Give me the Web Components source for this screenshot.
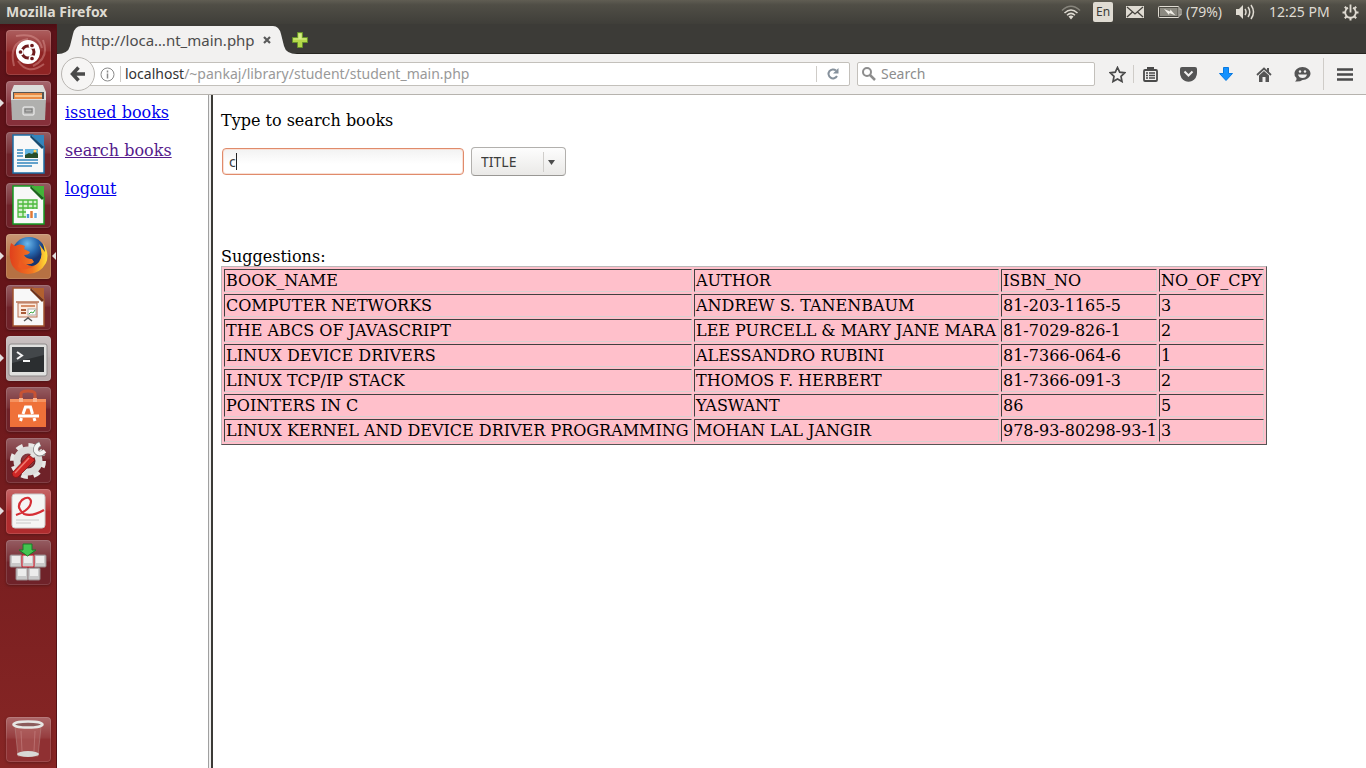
<!DOCTYPE html>
<html lang="en">
<head>
<meta charset="utf-8">
<title>Mozilla Firefox</title>
<style>
  html, body { margin: 0; }
  body { background: #fff; font-family: "Noto Sans", "Open Sans", sans-serif; font-size: 14px; }
</style>
</head>
<body>
<desktop-shell>
  <top-panel slot="panel"></top-panel>
  <app-launcher slot="launcher"></app-launcher>
  <browser-window>
    <tab-strip slot="chrome"></tab-strip>
    <nav-toolbar slot="chrome"></nav-toolbar>
    <menu-frame slot="menu"></menu-frame>
    <search-frame slot="main"></search-frame>
  </browser-window>
</desktop-shell>

<script>
const define = (name, css, html) => {
  const template = document.createElement('template');
  template.innerHTML = `<style>*,:host{box-sizing:border-box}svg{display:block}${css}</style>${html}`;
  customElements.define(name, class extends HTMLElement {
    constructor() {
      super();
      this.attachShadow({ mode: 'open' }).append(template.content.cloneNode(true));
    }
  });
};

define('desktop-shell', `
  :host { display: grid; grid-template: auto 1fr / auto 1fr; min-height: 100vh; }
  .panel { grid-column: 1 / 3; }
`, `<div class="panel"><slot name="panel"></slot></div><slot name="launcher"></slot><slot></slot>`);

/* ---------- top panel ---------- */
define('top-panel', `
  :host { display: flex; align-items: center; height: 24px; padding: 0 7px 0 6px;
    background: linear-gradient(#605d53, #504e46 20%, #3f3e39); color: #dfdbd2; }
  .title { flex: 1; font-weight: 700; font-size: 14px; line-height: 24px; }
  .indicators { display: flex; align-items: center; font-size: 14px; line-height: 24px; }
  .lang { width: 20px; height: 20px; margin: 0 13px 0 12px; border-radius: 2px; background: #dfdbd2; color: #3c3b37;
    font-size: 12px; line-height: 20px; text-align: center; }
  .pct { margin: 0 13px 0 4px; width: 37px; white-space: nowrap; }
  .time { margin: 0 13px; width: 60px; white-space: nowrap; }
  .bat { margin-left: 14px; }
`, `
  <span class="title">Mozilla Firefox</span>
  <div class="indicators">
    <svg width="20" height="16" viewBox="0 0 20 16" fill="none" stroke="#dfdbd2" stroke-width="1.5">
      <path d="M1 6.500Q10-2 19 6.500" opacity=".4"/><path d="M3.500 9Q10 3 16.500 9"/><path d="M6 11.200Q10 7.500 14 11.200"/><path d="M7.500 12.500 10 15.500 12.500 12.500Q10 10.500 7.500 12.500Z" fill="#dfdbd2" stroke="none"/></svg>
    <span class="lang">En</span>
    <svg width="18" height="12" viewBox="0 0 18 12"><rect width="18" height="12" fill="#dfdbd2"/><path d="M1 1 9 8 17 1M1 11 6.500 6M17 11 11.500 6" stroke="#46443e" stroke-width="1.300" fill="none"/></svg>
    <svg class="bat" width="24" height="12" viewBox="0 0 24 12"><rect x=".5" y=".5" width="20.500" height="11" rx="1" fill="none" stroke="#dfdbd2"/><rect x="2" y="2" width="17.500" height="8" fill="#8b8980"/><path d="M21.500 3h1.500v6h-1.500" fill="none" stroke="#dfdbd2"/><path d="M6 3 12 5.500 12.500 3.500 17.500 9.500 11.500 7 11 9Z" fill="#f0ede5"/></svg>
    <span class="pct">(79%)</span>
    <svg width="20" height="16" viewBox="0 0 20 16"><path d="M0 5h3l4-4v14l-4-4H0Z" fill="#dfdbd2"/><path d="M9 5q2 3 0 6M12 3q3.500 5 0 10M15 1q5 7 0 14" stroke="#dfdbd2" stroke-width="1.500" fill="none"/></svg>
    <span class="time">12:25 PM</span>
    <svg width="17" height="17" viewBox="-8.500 -8.500 17 17" fill="none" stroke="#dfdbd2"><path d="M-2.500-4.700A5.300 5.300 0 1 0 2.500-4.700" stroke-width="1.800"/><path d="M0-8V0" stroke-width="1.800"/><path d="M-8 0h3M5 0h3M0 5v3M-5.700-5.700l2 2M5.700-5.700l-2 2M-5.700 5.700l2-2M5.700 5.700l-2-2" stroke-width="2"/></svg>
  </div>`);

/* ---------- launcher ---------- */
define('app-launcher', `
  :host { display: block; width: 57px; background: linear-gradient(#4c0d13, #5d1219 8px, #661519 35%, #872625); border-right: 1px solid #571116; }
  nav { display: flex; flex-direction: column; gap: 6px; padding: 6px 0 6px 6px; height: 100%; }
  .spacer { flex: 1; }
`, `
  <nav aria-label="Launcher">
    <launcher-tile label="Dash" style="--tile:#8f2424"><svg width="45" height="45" viewBox="0 0 45 45">
      <g fill="none" stroke="#e8a9a4" stroke-opacity=".4" stroke-width="2"><path d="M8 36Q2 12 22 9"/><path d="M10 6Q32 2 36 18"/><path d="M37 10Q44 28 27 36"/><path d="M38 34Q22 46 12 31"/></g>
      <circle cx="22" cy="22" r="12" fill="#fff"/><circle cx="22" cy="22" r="6" fill="none" stroke="#6e1a1c" stroke-width="3"/>
      <g stroke="#fff" stroke-width="1.500" fill="#6e1a1c"><circle cx="14.500" cy="22" r="2.600"/><circle cx="26" cy="15.500" r="2.600"/><circle cx="26" cy="28.500" r="2.600"/></g></svg></launcher-tile>
    <launcher-tile label="Files" running style="--tile:#86303a"><svg width="45" height="45" viewBox="0 0 45 45">
      <path d="M8 4h29l3 7v8H5v-8Z" fill="#dcdcda"/><path d="M7 11h31v8H7Z" fill="#555"/><path d="M8 12h28v8H8Z" fill="#e98b45"/><path d="M9 14h27v2H9Z" fill="#f8c690"/><path d="M5 18h35l-1 21H6Z" fill="#b0b0ae"/><path d="M5 18h35v1H5Z" fill="#ddd"/><rect x="17" y="26" width="11" height="8" rx="1" fill="#b5b5b3" stroke="#f5f5f5"/><rect x="19" y="28" width="7" height="3" fill="none" stroke="#777"/></svg></launcher-tile>
    <launcher-tile label="Writer"><svg width="45" height="45" viewBox="0 0 45 45">
      <path d="M7 3h20l11 11v27H7Z" fill="#f8f8f8" stroke="#1b6ea5" stroke-width="1.500"/><path d="M25 3h13v12Z" fill="#3385bd"/><path d="M25 3 38 15 36 17 24 5Z" fill="#174b70"/><rect x="19" y="17" width="13" height="9" fill="#61b3df"/><path d="M19 26v-3l4-2 3 1 3-3 3 3v4Z" fill="#274d29"/><circle cx="29" cy="19" r="1.500" fill="#ffd65c"/><path d="M11 18h6M11 21h6M11 24h6M11 28h21M11 31h21M11 34h15" stroke="#3385bd" stroke-width="1.500"/></svg></launcher-tile>
    <launcher-tile label="Calc"><svg width="45" height="45" viewBox="0 0 45 45">
      <path d="M7 3h20l11 11v27H7Z" fill="#f8f8f8" stroke="#159b22" stroke-width="1.500"/><path d="M25 3h13v12Z" fill="#43b338"/><path d="M25 3 38 15 36 17 24 5Z" fill="#1c651c"/><rect x="12" y="17" width="19" height="17" fill="#d6f1cf"/><path d="M12 17h19v17H12ZM12 21h19M12 25h19M12 29h19M17 17v17M22 17v17M27 17v17" fill="none" stroke="#4cb93d" stroke-width="1.300"/><rect x="20" y="26" width="12" height="9" fill="#fff"/><path d="M22 35v-4" stroke="#4d96d3" stroke-width="2.500"/><path d="M25.500 35v-7" stroke="#e07936" stroke-width="2.500"/><path d="M29.500 35v-5" stroke="#65a7dc" stroke-width="2.500"/></svg></launcher-tile>
    <launcher-tile label="Firefox" running active style="--tile:#b67143"><svg width="45" height="45" viewBox="0 0 45 45">
      <defs><radialGradient id="sea" cx=".45" cy=".2"><stop stop-color="#6db9ec"/><stop offset=".6" stop-color="#2667ae"/><stop offset="1" stop-color="#173571"/></radialGradient><linearGradient id="fur" x1="0" x2="1"><stop stop-color="#e0401c"/><stop offset=".6" stop-color="#f37621"/><stop offset="1" stop-color="#ffe338"/></linearGradient></defs>
      <circle cx="23" cy="20" r="17" fill="url(#sea)"/>
      <path d="M5 9 9 12Q14 9 19 12L18 15 24 18Q23 21 18 21 20 25 26 25L28 28Q25 31 20 30 27 35 33 28 38 21 33 10L39 18 37 9Q44 20 40 29 34 40 22 40 6 39 4 24 3 15 5 9Z" fill="url(#fur)"/><path d="M14 25Q17 33 28 32 20 38 12 33Z" fill="#ed5a20"/></svg></launcher-tile>
    <launcher-tile label="Impress"><svg width="45" height="45" viewBox="0 0 45 45">
      <path d="M7 3h20l11 11v27H7Z" fill="#f8f8f8" stroke="#a0522e" stroke-width="1.500"/><path d="M25 3h13v12Z" fill="#b2602f"/><path d="M25 3 38 15 36 17 24 5Z" fill="#6e321a"/><rect x="12" y="18" width="19" height="14" fill="#fcebe0" stroke="#b87354"/><path d="M15 21h14" stroke="#d68f69" stroke-width="2"/><path d="M15 25h5M15 28h5" stroke="#a95d3b" stroke-width="2"/><rect x="22" y="24" width="8" height="6" fill="#fff" stroke="#aaa"/><path d="m23 29 2-2 2 1 2-3" fill="none" stroke="#3faa42"/><path d="M22 32v2M18 36l4-3 4 3" fill="none" stroke="#555" stroke-width="1.500"/><path d="M10 17h23" stroke="#b87354" stroke-width="1.500"/></svg></launcher-tile>
    <launcher-tile label="Terminal" running style="--tile:#b8adad"><svg width="45" height="45" viewBox="0 0 45 45">
      <rect x="3" y="8" width="38" height="32" rx="2" fill="#e0e0de" stroke="#8e8a8a"/><rect x="6" y="11" width="32" height="25" fill="#2b2e30"/><path d="M6 11h32v8L6 27Z" fill="#43474a"/><path d="m11 16 5 3.500-5 3.500M17 25h7" fill="none" stroke="#f5f5f5" stroke-width="2"/></svg></launcher-tile>
    <launcher-tile label="Software Center"><svg width="45" height="45" viewBox="0 0 45 45">
      <path d="M4 12h36v28H4Z" fill="#ef7139"/><path d="M4 12h36v3H4Z" fill="#f5925f"/><path d="M15 13V7q0-3 7-3t7 3v6" fill="none" stroke="#c75334" stroke-width="3"/><path d="M13 11h4v4h-4M27 11h4v4h-4" fill="#f9b490"/><path d="M17 27 19.500 20h5l2 7M15.500 31l-1 3M28 31l1 3" fill="none" stroke="#fff" stroke-width="3"/><path d="M12 29h21" stroke="#fff" stroke-width="3"/></svg></launcher-tile>
    <launcher-tile label="System Settings"><svg width="45" height="45" viewBox="0 0 45 45">
      <circle cx="22" cy="23" r="15.500" fill="none" stroke="#e8e8e6" stroke-width="5" stroke-dasharray="6.500 5.670"/><circle cx="22" cy="23" r="11" fill="none" stroke="#dcdcda" stroke-width="7"/><circle cx="22" cy="23" r="6" fill="#8c3a3d"/>
      <path d="m23 18 8-8 3 4-8 7Z" fill="#e4e4e2"/><path d="M34 6Q29 8 30 13 33 18 38 14" fill="none" stroke="#888" stroke-width="5.500"/><path d="M34 6Q29 8 30 13 33 18 39 13" fill="none" stroke="#f5f5f4" stroke-width="4"/><path d="m23 17 6 5L12 39Q7 41 6 35Z" fill="#cf2726" stroke="#811" stroke-width=".8"/><path d="m23 20-14 15" stroke="#f07a70" stroke-width="1.500"/></svg></launcher-tile>
    <launcher-tile label="Document Viewer" running style="--tile:#b02c2e"><svg width="45" height="45" viewBox="0 0 45 45">
      <rect x="6" y="5" width="33" height="34" rx="3" fill="#f5f5f4" stroke="#c9c9c9"/><path d="M10 26Q25 21 25 12 23 6 16 11 9 18 18 25 26 28 38 21" fill="none" stroke="#d62e35" stroke-width="2.200"/><path d="M10 31h23M10 34h15" stroke="#c8c8c8"/></svg></launcher-tile>
    <launcher-tile label="Keyboard Layout"><svg width="45" height="45" viewBox="0 0 45 45">
      <g fill="#c9c9ca" stroke="#96888b"><rect x="4" y="15" width="12" height="12" rx="1"/><rect x="28" y="15" width="12" height="12" rx="1"/><rect x="16" y="15" width="12" height="12" rx="1" stroke="#d12"/><rect x="10" y="28" width="12" height="12" rx="1"/><rect x="22" y="28" width="12" height="12" rx="1"/></g><path d="M6 16h8v7H6ZM18 16h8v7h-8ZM30 16h8v7h-8ZM12 29h8v7h-8ZM24 29h8v7h-8Z" fill="#ececec"/><path d="M17 4h9v6h4l-8.500 6L13 10h4Z" fill="#43c451" stroke="#187c27"/></svg></launcher-tile>
    <div class="spacer"></div>
    <launcher-tile label="Trash" style="--tile:#8f3032"><svg width="45" height="45" viewBox="0 0 45 45">
      <path d="M9 10h26l-3 29H12Z" fill="#b86968" fill-opacity=".5" stroke="#b98b8a" stroke-opacity=".5"/><ellipse cx="22" cy="37" rx="11" ry="3" fill="#d8d8d6"/><ellipse cx="22" cy="7.500" rx="14.500" ry="3" fill="#8b5c5c" stroke="#e6e6e4" stroke-width="2.500"/><path d="M15 14l1 20M29 14l-1 20" stroke="#d79c9b" stroke-opacity=".4"/></svg></launcher-tile>
  </nav>`);

customElements.define('launcher-tile', class extends HTMLElement {
  constructor() {
    super();
    this.attachShadow({ mode: 'open' }).innerHTML = `<style>
      :host { display: block; position: relative; width: 45px; height: 45px; }
      button { all: unset; display: block; width: 45px; height: 45px; border-radius: 4px;
        background: linear-gradient(#fff4, #fff1 45%, #fff0 50%), var(--tile, #6f2229);
        box-shadow: inset 0 0 0 1px #fff2, 0 1px 3px #0004; }
      :host([running])::before, :host([active])::after { content: ""; position: absolute; top: 18px;
        border: 4px solid transparent; }
      :host([running])::before { left: -6px; border-left-color: #e3dede; border-right-width: 0; }
      :host([active])::after { right: -5px; border-right-color: #e3dede; border-left-width: 0; }
    </style><button type="button"><slot></slot></button>`;
  }
  connectedCallback() {
    this.shadowRoot.querySelector('button').setAttribute('aria-label', this.getAttribute('label'));
  }
});

/* ---------- browser ---------- */
define('browser-window', `
  :host { display: flex; flex-direction: column; min-width: 0; }
  .frames { flex: 1; display: grid; grid-template-columns: 151px 5px 1fr; }
  .divider { background: linear-gradient(90deg, #a0a0a0 1px, #f0f0f0 1px 3px, #3c3b37 3px); }
`, `<slot name="chrome"></slot>
  <div class="frames"><slot name="menu"></slot><div class="divider"></div><slot name="main"></slot></div>`);

define('tab-strip', `
  :host { display: flex; align-items: end; height: 30px; background: linear-gradient(#3c3b37 29px, #262521 29px); }
  .edge { flex: none; }
  .tab { display: flex; align-items: center; justify-content: space-between; width: 192px; height: 28px;
    background: #f2f1f0; color: #4c4c4c; font-size: 15px; line-height: 28px; white-space: nowrap; }
  button { all: unset; }
  .add { align-self: center; padding-top: 2px; margin-left: -5px; }
  .close { margin-right: 2px; }
`, `
  <svg class="edge" width="24" height="28" viewBox="0 0 24 28"><path d="M0 28Q11 28 13 20L16 8Q18 0 24 0V28Z" fill="#f2f1f0"/></svg>
  <div class="tab"><span>http://loca…nt_main.php</span><button class="close" aria-label="Close tab"><svg width="8" height="8" viewBox="0 0 8 8"><path d="m1 1 6 6M7 1 1 7" stroke="#5a5a5a" stroke-width="2.200"/></svg></button></div>
  <svg class="edge" width="24" height="28" viewBox="0 0 24 28"><path d="M24 28Q13 28 11 20L8 8Q6 0 0 0V28Z" fill="#f2f1f0"/></svg>
  <button class="add" aria-label="New tab"><svg width="16" height="16" viewBox="0 0 16 16"><path d="M5.500.5h5v5h5v5h-5v5h-5v-5h-5v-5h5Z" fill="#b5d94a" stroke="#67932b"/><path d="M6.500 1.500h3v5h5v1h-13v-1h5Z" fill="#d7ec8b"/></svg></button>`);

define('nav-toolbar', `
  :host { display: flex; align-items: center; height: 41px; padding: 0 13px 0 4px; background: #f2f1f0; border-bottom: 1px solid #b6b3ae; }
  button { all: unset; flex: none; }
  .back { display: grid; place-items: center; width: 32px; height: 32px; border: 1px solid #b9b6b2; border-radius: 50%;
    background: #f6f5f4; z-index: 1; }
  .box { display: flex; align-items: center; height: 24px; background: #fff; border: 1px solid #c3c0bb; border-radius: 2px; }
  .url { flex: 1; margin: 0 7px 0 -7px; padding: 0 10px 0 11px; }
  .search { flex: 0 1 238px; padding: 0 4px; }
  .rule { width: 1px; height: 16px; background: #cfccc8; flex: none; }
  .short { margin-left: 5px; }
  .mid { height: 18px; }
  .tall { height: 32px; margin-left: 2px; }
  .address { flex: 1; margin: 0 4px; font-size: 14px; line-height: 22px; color: #999; white-space: nowrap; }
  .address b { font-weight: 400; color: #333; }
  .reload { margin-left: 10px; }
  input { all: unset; flex: 1; min-width: 0; margin-left: 5px; font-size: 14px; line-height: 22px; color: #333; }
  input::placeholder { color: #8d8d8d; opacity: 1; }
  .star { display: flex; align-items: center; gap: 7px; margin: 0 -3px 0 14px; }
  .tool { width: 38px; display: grid; place-items: center; }
  .menu { margin-left: 13px; }
`, `
  <button class="back" aria-label="Back"><svg width="16" height="16" viewBox="0 0 16 16"><path d="M8.500 1.500 2.500 8l6 6.500M3 8h12" fill="none" stroke="#4a4a4a" stroke-width="3.500"/></svg></button>
  <div class="box url">
    <svg width="15" height="15" viewBox="0 0 15 15"><circle cx="7.500" cy="7.500" r="6.500" fill="none" stroke="#8a8a8a"/><path d="M7.500 6.500v5M7.500 3.500v2" stroke="#8a8a8a" stroke-width="1.500"/></svg>
    <span class="rule short"></span>
    <span class="address"><b>localhost</b>/~pankaj/library/student/student_main.php</span>
    <span class="rule"></span>
    <button class="reload" aria-label="Reload"><svg width="12" height="12" viewBox="0 0 12 12"><path d="M9 2.500A4.500 4.500 0 1 0 10 8" fill="none" stroke="#86919c" stroke-width="2"/><path d="M11.500 0v5.500H6Z" fill="#86919c"/></svg></button>
  </div>
  <label class="box search">
    <svg width="14" height="14" viewBox="0 0 14 14"><circle cx="5" cy="5" r="4" fill="none" stroke="#8d8d8d" stroke-width="2"/><path d="m8 8 5 5" stroke="#8d8d8d" stroke-width="2.500"/></svg>
    <input type="text" placeholder="Search" aria-label="Search">
  </label>
  <button class="star" aria-label="Bookmark"><svg width="17" height="17" viewBox="0 0 17 17"><path d="M8.500 1.500l2.200 4.700 5 .6-3.700 3.500 1 5.200-4.500-2.600L4 15.500l1-5.200L1.300 6.800l5-.6Z" fill="none" stroke="#4a4a4a" stroke-width="1.700"/></svg><span class="rule mid"></span></button>
  <button class="tool" aria-label="Bookmarks list"><svg width="15" height="15" viewBox="0 0 15 15"><path d="M5 3V1h5v2" fill="none" stroke="#4a4a4a" stroke-width="2"/><rect x="1" y="3" width="13" height="11" rx="1" fill="#f2f1f0" stroke="#4a4a4a" stroke-width="1.800"/><path d="M3 6h2M6 6h6M3 8.500h2M6 8.500h6M3 11h2M6 11h6" stroke="#4a4a4a" stroke-width="1.300"/></svg></button>
  <button class="tool" aria-label="Pocket"><svg width="17" height="15" viewBox="0 0 17 15"><path d="M2 0h13q2 0 2 2v4q0 5-5 8-3.500 1.500-7 0Q0 11 0 6V2Q0 0 2 0Z" fill="#555"/><path d="m4.500 4.500 4 4 4-4" fill="none" stroke="#f2f1f0" stroke-width="2"/></svg></button>
  <button class="tool" aria-label="Downloads"><svg width="14" height="14" viewBox="0 0 14 14"><path d="M4.500.5h5v6h4L7 13.500.5 6.500h4Z" fill="#1492ff" stroke="#0879e0"/></svg></button>
  <button class="tool" aria-label="Home"><svg width="16" height="15" viewBox="0 0 16 15"><path d="M1 8 8 1.500 15 8" fill="none" stroke="#555" stroke-width="1.800"/><path d="M11 1h2v4h-2ZM3 8.500 8 4l5 4.500V15H9.500v-5h-3v5H3Z" fill="#555"/></svg></button>
  <button class="tool" aria-label="Hello"><svg width="17" height="15" viewBox="0 0 17 15"><path d="M8.500 0C13 0 16.500 3 16.500 6.500S13 13 8.500 13Q6 15 1 14.500 3 13 2.500 11 0 9 .5 6.500C.5 3 4 0 8.500 0Z" fill="#555"/><circle cx="6" cy="4.500" r="1.200" fill="#f2f1f0"/><circle cx="11" cy="4.500" r="1.200" fill="#f2f1f0"/><path d="M4 7.500h9q-1 3.500-4.500 3.500T4 7.500Z" fill="#f2f1f0"/></svg></button>
  <span class="rule tall"></span>
  <button class="menu" aria-label="Open menu"><svg width="16" height="13" viewBox="0 0 16 13"><path d="M0 1.500h16M0 6.500h16M0 11.500h16" stroke="#4a4a4a" stroke-width="2.500"/></svg></button>`);

/* ---------- page frames ---------- */
define('menu-frame', `
  :host { display: block; padding: 8px; background: #fff; font: 16px/19px "DejaVu Serif", serif; }
  nav { display: flex; flex-direction: column; align-items: start; gap: 19px; }
  a { color: #0000ee; } a.visited { color: #551a8b; }
`, `<nav><a href="#issued">issued books</a><a href="#search" class="visited">search books</a><a href="#logout">logout</a></nav>`);

define('search-frame', `
  :host { display: block; padding: 16px 8px; background: #fff; color: #000; font: 16px/19px "DejaVu Serif", serif; min-width: 0; }
  p { margin: 0; }
  form { display: flex; align-items: center; gap: 7px; margin: 17px 0 71px 1px; height: 29px;
    font-family: "Noto Sans", sans-serif; font-size: 14px; color: #3c3c3c; }
  .field { position: relative; }
  input { all: unset; display: block; box-sizing: border-box; width: 242px; height: 27px; padding: 0 6px; border: 1px solid #e08b6b; border-radius: 4px;
    background: linear-gradient(#f2f2f2, #fff 60%); box-shadow: inset 0 0 0 1px #f9e0d6; font-size: 14px; line-height: 25px; caret-color: transparent; }
  .caret { position: absolute; left: 14px; top: 5px; width: 1px; height: 17px; background: #222; }
  .select { display: grid; width: 95px; height: 29px; }
  select, .select svg { grid-area: 1 / 1; }
  select { appearance: none; margin: 0; padding: 0 9px; border: 1px solid #b2b0ad; border-bottom-color: #999794; border-radius: 4px;
    background: linear-gradient(#fdfdfd, #eae9e7); font: inherit; color: inherit; }
  .select svg { justify-self: end; align-self: center; pointer-events: none; margin-right: 11px; }
  table { table-layout: fixed; width: 1046px; background: pink; border: 1px solid; border-color: #b9b9b9 #555 #555 #b9b9b9; border-spacing: 2px; }
  td { padding: 1px; border: 1px solid; border-color: #404040 #d8d0d0 #d8d0d0 #404040; white-space: nowrap; }
  .name { width: 468px; } .author { width: 305px; } .isbn { width: 156px; } .copies { width: 105px; }
`, `
  <p><label for="q">Type to search books</label></p>
  <form onsubmit="return false">
    <div class="field"><input id="q" type="text" value="c"><span class="caret"></span></div>
    <div class="select"><select aria-label="Search by"><option>TITLE</option><option>AUTHOR</option></select>
      <svg width="12" height="20" viewBox="0 0 12 20"><path d="M.5 0v20" stroke="#d0cecb"/><path d="M5 8h7l-3.500 5Z" fill="#4c4c4c"/></svg></div>
  </form>
  <p>Suggestions:</p>
  <table><colgroup><col class="name"><col class="author"><col class="isbn"><col class="copies"></colgroup><tbody>
    <tr><td>BOOK_NAME</td><td>AUTHOR</td><td>ISBN_NO</td><td>NO_OF_CPY</td></tr>
    <tr><td>COMPUTER NETWORKS</td><td>ANDREW S. TANENBAUM</td><td>81-203-1165-5</td><td>3</td></tr>
    <tr><td>THE ABCS OF JAVASCRIPT</td><td>LEE PURCELL &amp; MARY JANE MARA</td><td>81-7029-826-1</td><td>2</td></tr>
    <tr><td>LINUX DEVICE DRIVERS</td><td>ALESSANDRO RUBINI</td><td>81-7366-064-6</td><td>1</td></tr>
    <tr><td>LINUX TCP/IP STACK</td><td>THOMOS F. HERBERT</td><td>81-7366-091-3</td><td>2</td></tr>
    <tr><td>POINTERS IN C</td><td>YASWANT</td><td>86</td><td>5</td></tr>
    <tr><td>LINUX KERNEL AND DEVICE DRIVER PROGRAMMING</td><td>MOHAN LAL JANGIR</td><td>978-93-80298-93-1</td><td>3</td></tr>
  </tbody></table>`);
</script>
</body>
</html>
